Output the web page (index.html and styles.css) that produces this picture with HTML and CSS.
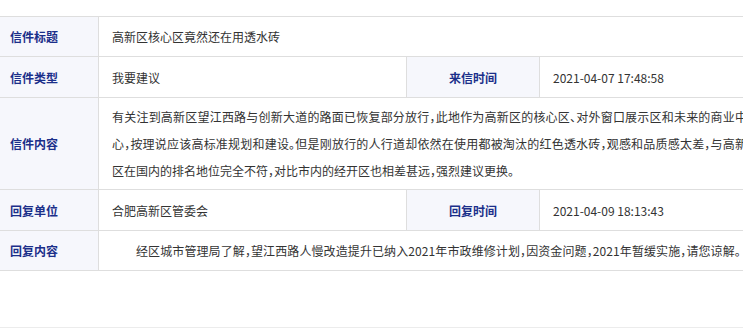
FILE: index.html
```html
<!DOCTYPE html>
<html lang="zh-CN">
<head>
<meta charset="utf-8">
<title>信件详情</title>
<link rel="stylesheet" href="styles.css">
</head>
<body>
<div class="letter">
  <div class="sheet">
    <div class="label">信件标题</div>
    <div class="value span3">高新区核心区竟然还在用透水砖</div>

    <div class="label">信件类型</div>
    <div class="value">我要建议</div>
    <div class="label center">来信时间</div>
    <div class="value">2021-04-07 17:48:58</div>

    <div class="label">信件内容</div>
    <div class="value span3 para">有关注到高新区望江西路与创新大道的路面已恢复部分放行，此地作为高新区的核心区、对外窗口展示区和未来的商业中心，按理说应该高标准规划和建设。但是刚放行的人行道却依然在使用都被淘汰的红色透水砖，观感和品质感太差，与高新区在国内的排名地位完全不符，对比市内的经开区也相差甚远，强烈建议更换。</div>

    <div class="label">回复单位</div>
    <div class="value">合肥高新区管委会</div>
    <div class="label center">回复时间</div>
    <div class="value">2021-04-09 18:13:43</div>

    <div class="label">回复内容</div>
    <div class="value span3 reply">经区城市管理局了解，望江西路人慢改造提升已纳入2021年市政维修计划，因资金问题，2021年暂缓实施，请您谅解。</div>
  </div>
</div>
</body>
</html>
```

FILE: styles.css
```css
html, body {
  margin: 0;
  padding: 0;
  background: #fff;
  overflow: hidden;
}

body {
  font-family: "Microsoft YaHei", "Noto Sans CJK SC", sans-serif;
  font-size: 12px;
  color: #333;
}

.letter {
  width: 766px;
  padding: 16px 0 56px;
  border-bottom: 1px solid #ececec;
}

/* detail sheet: grid lines come from the 1px gaps over a grey background */
.sheet {
  display: grid;
  grid-template-columns: 98px 307px 132px 1fr;
  grid-template-rows: 39px 40px 91px 40px 39px;
  gap: 1px;
  background: #dedede;
  border-top: 1px solid #dedede;
  border-bottom: 1px solid #dedede;
}

.label {
  display: flex;
  align-items: center;
  padding-left: 10px;
  background: #f6f7fc;
  color: #1b2f8a;
  font-weight: bold;
}

.label.center {
  justify-content: center;
  padding-left: 0;
}

.value {
  display: flex;
  align-items: center;
  padding: 0 13px;
  background: #fff;
  white-space: nowrap;
}

.span3 {
  grid-column: span 3;
}

/* half-width punctuation keeps long CJK lines compact */
.para,
.reply {
  font-feature-settings: "halt";
}

.para {
  display: block;
  align-self: stretch;
  white-space: normal;
  text-align: justify;
  line-height: 27px;
  padding: 5px 19px 0 13px;
}

.reply {
  text-indent: 24px;
  letter-spacing: 0.1px;
}
```
